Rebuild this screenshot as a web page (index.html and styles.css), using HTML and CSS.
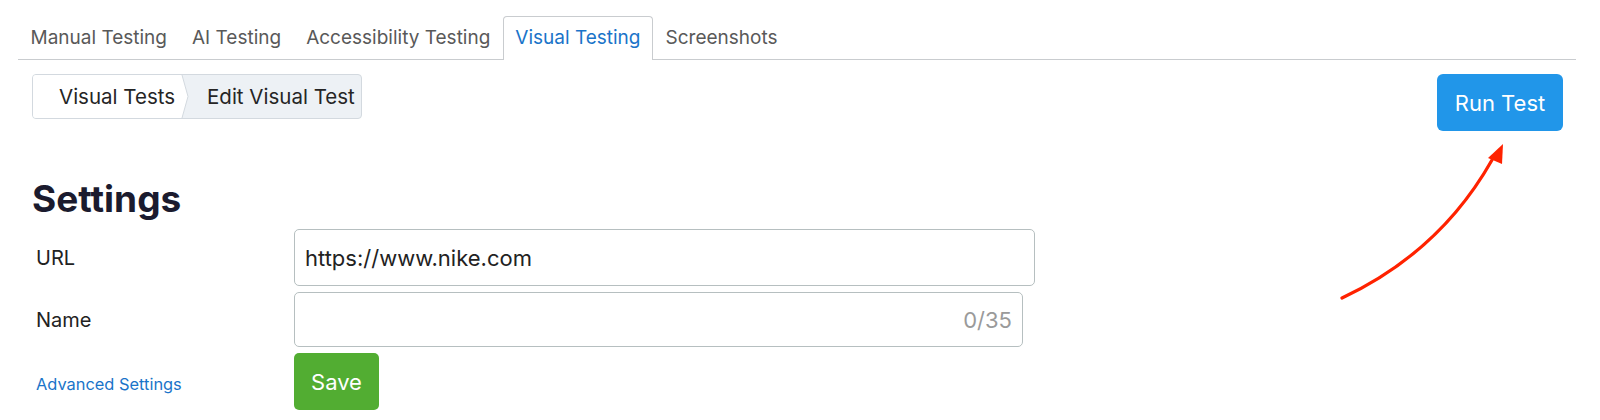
FILE: index.html
```html
<!DOCTYPE html>
<html lang="en">
<head>
<meta charset="utf-8">
<title>Edit Visual Test</title>
<link rel="stylesheet" href="styles.css">
</head>
<body>
<div class="page">
  <nav class="tabs">
    <a class="tab">Manual Testing</a>
    <a class="tab">AI Testing</a>
    <a class="tab">Accessibility Testing</a>
    <a class="tab active">Visual Testing</a>
    <a class="tab">Screenshots</a>
  </nav>
  <div class="content">
    <div class="toolbar">
      <div class="breadcrumb">
        <span class="crumb first">Visual Tests</span>
        <svg class="divider" width="8" height="43" viewBox="0 0 8 43"><polygon points="0,0 1,0 7,21.5 1,43 0,43" fill="#fff"/><polyline points="1,0 7,21.5 1,43" fill="none" stroke="#d3d9df" stroke-width="1"/></svg>
        <span class="crumb current">Edit Visual Test</span>
      </div>
      <button class="btn btn-primary">Run Test</button>
    </div>
    <h1 class="title">Settings</h1>
    <div class="form">
      <div class="label">URL</div>
      <div class="field field-url"><span class="value">https://www.nike.com</span></div>
      <div class="label">Name</div>
      <div class="field field-name"><span class="value"></span><span class="counter">0/35</span></div>
      <a class="label link">Advanced Settings</a>
      <div class="actions"><button class="btn btn-save">Save</button></div>
    </div>
  </div>
  <svg class="arrow" width="1600" height="420" viewBox="0 0 1600 420">
    <path d="M1342 298 Q1440 252 1492 160" fill="none" stroke="#ff2200" stroke-width="3.2" stroke-linecap="round"/>
    <polygon points="1503,144 1488,158 1502,164" fill="#ff2200"/>
  </svg>
</div>
</body>
</html>
```
FILE: styles.css
```css
* { box-sizing: border-box; }
html, body { margin: 0; padding: 0; background: #fff; }
body { font-family: Inter, "Noto Sans", sans-serif; color: #222; }

.page { position: relative; width: 1600px; height: 420px; padding: 16px 24px 0 18px; overflow: hidden; }

.tabs { display: flex; align-items: flex-end; border-bottom: 1px solid #c9cccf; height: 44px; }
.tab {
  display: block;
  padding: 0 11.5px;
  height: 43px;
  line-height: 41px;
  font-size: 19px;
  color: #595959;
  border: 1px solid transparent;
  border-bottom: none;
  border-radius: 4px 4px 0 0;
  white-space: nowrap;
}
.tab.active {
  color: #1a74c9;
  border-color: #c9cccf;
  background: #fff;
  height: 44px;
  margin-bottom: -1px;
}

.content { padding: 14px 13px 0 14px; }

.toolbar { display: flex; justify-content: space-between; align-items: flex-start; }

.breadcrumb {
  display: flex;
  height: 45px;
  border: 1px solid #d3d9df;
  border-radius: 4px;
  overflow: hidden;
  background: #edf1f5;
}
.crumb { display: flex; align-items: center; font-size: 20.5px; color: #252525; height: 43px; white-space: nowrap; }
.crumb.first { background: #fff; padding: 0 6px 0 26px; }
.crumb.current { padding: 0 6px 0 18px; }
.divider { display: block; height: 43px; flex: none; }

.btn { font-family: inherit; border: none; color: #fff; cursor: pointer; }
.btn-primary {
  width: 126px;
  height: 57px;
  border-radius: 6px;
  background: #2196e9;
  font-size: 22px;
}

.title {
  margin: 47px 0 0 0;
  font-size: 37px;
  font-weight: 700;
  line-height: 41px;
  color: #1b1b2e;
}

.form {
  display: grid;
  grid-template-columns: 262px auto;
  row-gap: 6px;
  margin-top: 10px;
  justify-content: start;
  align-items: center;
}
.label { padding-left: 4px; font-size: 20px; color: #222; }
.link { color: #1a74c9; font-size: 16.4px; padding-top: 4px; }

.field {
  display: flex;
  align-items: center;
  justify-content: space-between;
  border: 1px solid #b6bfc0;
  border-radius: 5px;
  padding: 0 10px 0 10px;
  font-size: 22px;
  color: #222;
}
.field-url { width: 741px; height: 57px; }
.field-name { width: 729px; height: 55px; }
.counter { color: #9a9a9a; font-size: 22px; }

.actions { display: flex; }
.btn-save {
  width: 85px;
  height: 57px;
  border-radius: 5px;
  background: #52ad32;
  font-size: 22px;
}

.arrow { position: absolute; left: 0; top: 0; pointer-events: none; }
```
